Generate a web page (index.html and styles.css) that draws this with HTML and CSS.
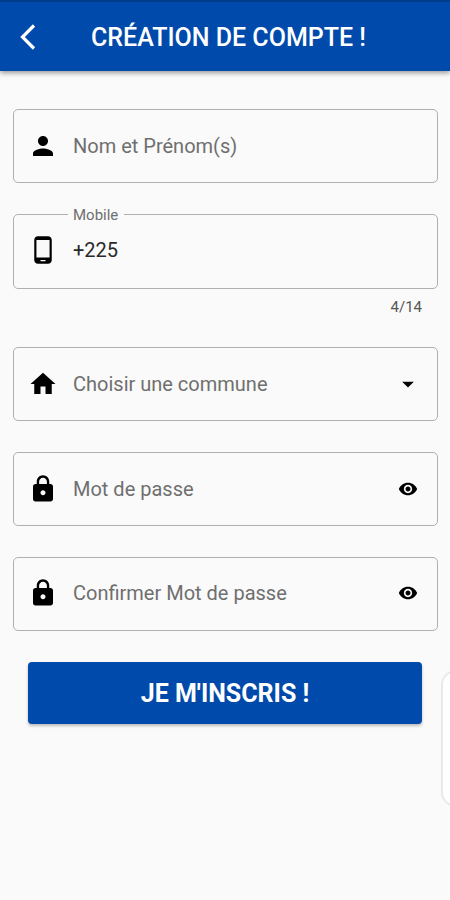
FILE: index.html
```html
<!DOCTYPE html>
<html lang="fr">
<head>
<meta charset="utf-8">
<title>Création de compte</title>
<link rel="stylesheet" href="styles.css">
</head>
<body>
<header class="appbar">
  <svg class="back" viewBox="0 0 16 26"><path d="M14 1.500 2.500 13 14 24.500"/></svg>
  <h1 class="title">CRÉATION DE COMPTE !</h1>
</header>
<form class="form">
  <div class="field">
    <svg class="icon" viewBox="0 0 24 24"><path d="M12 12c2.210 0 4-1.790 4-4s-1.790-4-4-4-4 1.790-4 4 1.790 4 4 4zm0 2c-2.670 0-8 1.340-8 4v2h16v-2c0-2.660-5.330-4-8-4z"/></svg>
    <span class="text name">Nom et Prénom(s)</span>
  </div>
  <div class="field mobile">
    <span class="label">Mobile</span>
    <svg class="icon" viewBox="0 0 24 24"><path d="M16 1H8C6.340 1 5 2.340 5 4v16c0 1.660 1.340 3 3 3h8c1.660 0 3-1.340 3-3V4c0-1.660-1.340-3-3-3zm-2 20h-4v-1h4v1zm3.250-3H6.750V4h10.500v14z"/></svg>
    <span class="text value">+225</span>
  </div>
  <div class="counter">4/14</div>
  <div class="field commune">
    <svg class="icon" viewBox="0 0 24 24"><path d="M10 20v-6h4v6h5v-8h3L12 3 2 12h3v8z"/></svg>
    <span class="text choose">Choisir une commune</span>
    <svg class="end arrow" viewBox="0 0 24 24"><path d="M7 10l5 5 5-5z"/></svg>
  </div>
  <div class="field password">
    <svg class="icon" viewBox="0 0 24 24"><path d="M18 8h-1V6c0-2.760-2.240-5-5-5S7 3.240 7 6v2H6c-1.100 0-2 .9-2 2v10c0 1.100.9 2 2 2h12c1.100 0 2-.9 2-2V10c0-1.100-.9-2-2-2zm-6 9c-1.100 0-2-.9-2-2s.9-2 2-2 2 .9 2 2-.9 2-2 2zm3.100-9H8.900V6c0-1.710 1.390-3.100 3.100-3.100 1.710 0 3.100 1.390 3.100 3.100v2z"/></svg>
    <span class="text pass">Mot de passe</span>
    <svg class="end" viewBox="0 0 24 24"><path d="M12 4.500C7 4.500 2.730 7.610 1 12c1.730 4.390 6 7.500 11 7.500s9.270-3.110 11-7.500c-1.730-4.390-6-7.500-11-7.500zM12 17c-2.760 0-5-2.240-5-5s2.240-5 5-5 5 2.240 5 5-2.240 5-5 5zm0-8c-1.660 0-3 1.340-3 3s1.340 3 3 3 3-1.340 3-3-1.340-3-3-3z"/></svg>
  </div>
  <div class="field confirm">
    <svg class="icon" viewBox="0 0 24 24"><path d="M18 8h-1V6c0-2.760-2.240-5-5-5S7 3.240 7 6v2H6c-1.100 0-2 .9-2 2v10c0 1.100.9 2 2 2h12c1.100 0 2-.9 2-2V10c0-1.100-.9-2-2-2zm-6 9c-1.100 0-2-.9-2-2s.9-2 2-2 2 .9 2 2-.9 2-2 2zm3.100-9H8.900V6c0-1.710 1.390-3.100 3.100-3.100 1.710 0 3.100 1.390 3.100 3.100v2z"/></svg>
    <span class="text again">Confirmer Mot de passe</span>
    <svg class="end" viewBox="0 0 24 24"><path d="M12 4.500C7 4.500 2.730 7.610 1 12c1.730 4.390 6 7.500 11 7.500s9.270-3.110 11-7.500c-1.730-4.390-6-7.500-11-7.500zM12 17c-2.760 0-5-2.240-5-5s2.240-5 5-5 5 2.240 5 5-2.240 5-5 5zm0-8c-1.660 0-3 1.340-3 3s1.340 3 3 3 3-1.340 3-3-1.340-3-3-3z"/></svg>
  </div>
  <button class="submit" type="button">JE M'INSCRIS !</button>
</form>
<div class="edge-panel"></div>
</body>
</html>
```
FILE: styles.css
```css
* { box-sizing: border-box; }
body {
  margin: 0;
  height: 900px;
  position: relative;
  overflow: hidden;
  background: #fafafa;
  font-family: Roboto, "Liberation Sans", sans-serif;
}
.appbar {
  height: 71px;
  padding: 3px 0 0 20px;
  display: flex;
  align-items: center;
  background: #004aab;
  border-top: 2px solid #003c8c;
  box-shadow: 0 2px 5px rgba(0, 0, 0, .4);
}
.back {
  width: 16px;
  height: 26px;
  margin-bottom: 2px;
  fill: none;
  stroke: #fff;
  stroke-width: 3.2;
}
.title {
  margin: 0 0 0 55px;
  font-size: 25px;
  line-height: 30px;
  font-weight: 500;
  color: #fff;
  white-space: nowrap;
}
.form {
  display: flex;
  flex-direction: column;
  padding: 38px 12px 0 13px;
}
.field {
  position: relative;
  flex: none;
  height: 74px;
  display: flex;
  align-items: center;
  padding: 0 19px 1px 14px;
  border: 1px solid #b0b0b0;
  border-radius: 5px;
}
.icon { width: 30px; height: 30px; flex: none; }
.text {
  margin-left: 15px;
  flex: 1;
  font-size: 20px;
  line-height: 24px;
  color: #6f6f6f;
  white-space: nowrap;
}
.value { color: #2a2a2a; }
.mobile { height: 75px; margin-top: 31px; padding-bottom: 3px; }
.label {
  position: absolute;
  left: 54px;
  top: -9px;
  padding: 0 6px 0 5px;
  background: #fafafa;
  font-size: 15px;
  line-height: 18px;
  color: #6f6f6f;
}
.counter {
  height: 18px;
  margin: 9px 16px 0 0;
  text-align: right;
  font-size: 15px;
  line-height: 18px;
  color: #555;
}
.commune { margin-top: 31px; }
.password { margin-top: 31px; }
.confirm { margin-top: 31px; padding-bottom: 2px; }
.end { width: 20px; height: 20px; flex: none; }
.arrow { width: 28px; height: 28px; margin-right: -4px; }
.submit {
  height: 62px;
  margin: 31px 16px 0 15px;
  padding: 1px 0 0;
  border: 0;
  border-radius: 4px;
  background: #004aab;
  box-shadow: 0 2px 3px rgba(0, 0, 0, .25);
  font: 700 25px/30px Roboto, "Liberation Sans", sans-serif;
  color: #fff;
}
.edge-panel {
  position: absolute;
  left: 441px;
  top: 670px;
  width: 30px;
  height: 137px;
  border: 2px solid #e9e9e9;
  border-radius: 17px;
  background: #fff;
}
```
